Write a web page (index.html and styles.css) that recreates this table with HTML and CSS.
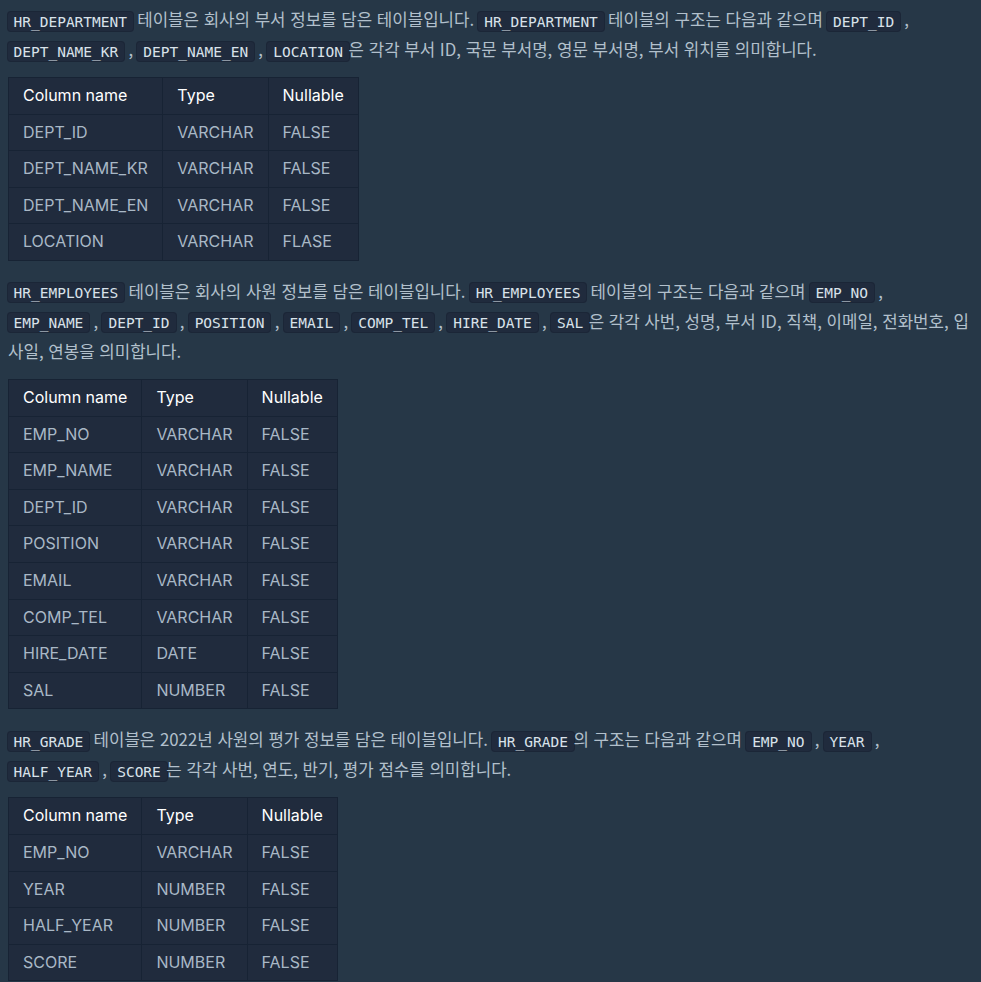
FILE: index.html
```html
<!DOCTYPE html>
<html lang="ko">
<head>
<meta charset="utf-8">
<title>HR tables</title>
<link rel="stylesheet" href="styles.css">
</head>
<body>
<div class="markdown">
<p><code>HR_DEPARTMENT</code> 테이블은 회사의 부서 정보를 담은 테이블입니다. <code>HR_DEPARTMENT</code> 테이블의 구조는 다음과 같으며 <code>DEPT_ID</code> , <code>DEPT_NAME_KR</code> , <code>DEPT_NAME_EN</code> , <code>LOCATION</code>은 각각 부서 ID, 국문 부서명, 영문 부서명, 부서 위치를 의미합니다.</p>
<table>
<thead><tr><th>Column name</th><th>Type</th><th>Nullable</th></tr></thead>
<tbody>
<tr><td>DEPT_ID</td><td>VARCHAR</td><td>FALSE</td></tr>
<tr><td>DEPT_NAME_KR</td><td>VARCHAR</td><td>FALSE</td></tr>
<tr><td>DEPT_NAME_EN</td><td>VARCHAR</td><td>FALSE</td></tr>
<tr><td>LOCATION</td><td>VARCHAR</td><td>FLASE</td></tr>
</tbody>
</table>
<p><code>HR_EMPLOYEES</code> 테이블은 회사의 사원 정보를 담은 테이블입니다. <code>HR_EMPLOYEES</code> 테이블의 구조는 다음과 같으며 <code>EMP_NO</code> ,<br><code>EMP_NAME</code> , <code>DEPT_ID</code> , <code>POSITION</code> , <code>EMAIL</code> , <code>COMP_TEL</code> , <code>HIRE_DATE</code> , <code>SAL</code>은 각각 사번, 성명, 부서 ID, 직책, 이메일, 전화번호, 입사일, 연봉을 의미합니다.</p>
<table>
<thead><tr><th>Column name</th><th>Type</th><th>Nullable</th></tr></thead>
<tbody>
<tr><td>EMP_NO</td><td>VARCHAR</td><td>FALSE</td></tr>
<tr><td>EMP_NAME</td><td>VARCHAR</td><td>FALSE</td></tr>
<tr><td>DEPT_ID</td><td>VARCHAR</td><td>FALSE</td></tr>
<tr><td>POSITION</td><td>VARCHAR</td><td>FALSE</td></tr>
<tr><td>EMAIL</td><td>VARCHAR</td><td>FALSE</td></tr>
<tr><td>COMP_TEL</td><td>VARCHAR</td><td>FALSE</td></tr>
<tr><td>HIRE_DATE</td><td>DATE</td><td>FALSE</td></tr>
<tr><td>SAL</td><td>NUMBER</td><td>FALSE</td></tr>
</tbody>
</table>
<p><code>HR_GRADE</code> 테이블은 2022년 사원의 평가 정보를 담은 테이블입니다. <code>HR_GRADE</code>의 구조는 다음과 같으며 <code>EMP_NO</code> , <code>YEAR</code> , <code>HALF_YEAR</code> , <code>SCORE</code>는 각각 사번, 연도, 반기, 평가 점수를 의미합니다.</p>
<table>
<thead><tr><th>Column name</th><th>Type</th><th>Nullable</th></tr></thead>
<tbody>
<tr><td>EMP_NO</td><td>VARCHAR</td><td>FALSE</td></tr>
<tr><td>YEAR</td><td>NUMBER</td><td>FALSE</td></tr>
<tr><td>HALF_YEAR</td><td>NUMBER</td><td>FALSE</td></tr>
<tr><td>SCORE</td><td>NUMBER</td><td>FALSE</td></tr>
</tbody>
</table>
</div>
</body>
</html>
```

FILE: styles.css
```css
html {
  overflow: hidden;
  background: #263747;
}
body {
  margin: 0;
  padding: 4px 9px 0 8px;
  background: #263747;
  color: #b2c0cc;
  font-family: Inter, "Noto Sans CJK KR", sans-serif;
  font-size: 16px;
}
.markdown p {
  margin: 0 0 13px;
  line-height: 30px;
  font-family: "Noto Sans CJK KR", "Noto Sans", sans-serif;
  font-size: 16.8px;
}
.markdown code {
  font-family: "DejaVu Sans Mono", monospace;
  font-size: 14.5px;
  line-height: normal;
  color: #d9e2ea;
  background: #202b3d;
  border: 1px solid #1b2637;
  border-radius: 4px;
  padding: 1.5px 6px;
  margin: 0 -1.5px;
}
.markdown table {
  border-collapse: collapse;
  background: #202b3d;
  margin: 0 0 15px;
}
.markdown th,
.markdown td {
  border: 1px solid #172334;
  padding: 5px 14px;
  line-height: 25.6px;
  text-align: left;
  font-weight: 400;
}
.markdown th {
  color: #ffffff;
}
.markdown td {
  color: #a9b8c6;
}
```
